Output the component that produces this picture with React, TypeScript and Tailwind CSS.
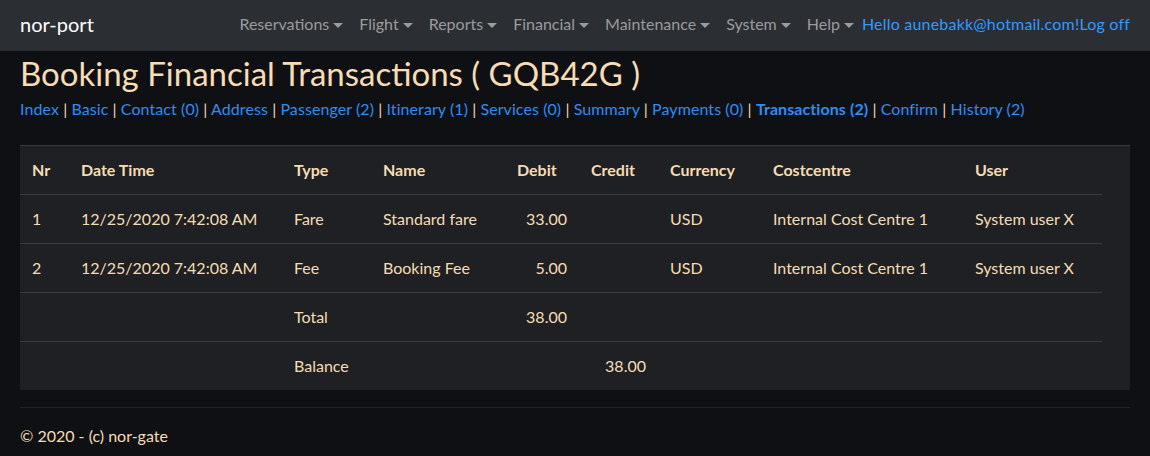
import React from 'react';

const font = { fontFamily: 'Lato, "Open Sans", sans-serif' };

const menus = ['Reservations', 'Flight', 'Reports', 'Financial', 'Maintenance', 'System', 'Help'];

const tabs = [
  'Index',
  'Basic',
  'Contact (0)',
  'Address',
  'Passenger (2)',
  'Itinerary (1)',
  'Services (0)',
  'Summary',
  'Payments (0)',
  'Transactions (2)',
  'Confirm',
  'History (2)',
];

const rows = [
  { nr: '1', when: '12/25/2020 7:42:08 AM', type: 'Fare', name: 'Standard fare', debit: '33.00', credit: '', cur: 'USD', cc: 'Internal Cost Centre 1', user: 'System user X' },
  { nr: '2', when: '12/25/2020 7:42:08 AM', type: 'Fee', name: 'Booking Fee', debit: '5.00', credit: '', cur: 'USD', cc: 'Internal Cost Centre 1', user: 'System user X' },
  { nr: '', when: '', type: 'Total', name: '', debit: '38.00', credit: '', cur: '', cc: '', user: '' },
  { nr: '', when: '', type: 'Balance', name: '', debit: '', credit: '38.00', cur: '', cc: '', user: '' },
];

const Caret = () => (
  <span className="ml-[4px] inline-block w-0 h-0 border-x-[5px] border-x-transparent border-t-[5px] border-t-[#9a9b9d] align-middle" />
);

export default function App() {
  return (
    <div className="min-h-[456px] bg-[#0f1013] text-[#f6dcb4]" style={font}>
      <nav className="h-[51px] bg-[#2b2e32] flex items-center px-[20px] pb-[4px]">
        <span className="text-[20px] text-white">nor-port</span>
        <div className="ml-auto flex items-center text-[16px]">
          {menus.map((m) => (
            <span key={m} className="px-[8px] text-[#9a9b9d]">
              {m}
              <Caret />
            </span>
          ))}
          <span className="tracking-[0.2px] text-[#3399ff]">Hello aunebakk@hotmail.com!</span>
          <span className="tracking-[0.2px] text-[#3399ff]">Log off</span>
        </div>
      </nav>

      <main className="px-[20px]">
        <h2 className="mt-[3px] text-[33px] leading-[38px] text-[#f8dcb4]">Booking Financial Transactions ( GQB42G )</h2>
        <div className="mt-[5px] text-[16px] leading-[24px] tracking-[0.08px]">
          {tabs.map((t, i) => (
            <React.Fragment key={t}>
              {i > 0 && <span className="text-[#f6dcb4]"> | </span>}
              <span className={t === 'Transactions (2)' ? 'font-bold text-[#2f8cf4]' : 'text-[#2f8cf4]'}>{t}</span>
            </React.Fragment>
          ))}
        </div>

        <div className="mt-[24px] bg-[#1f2023] border-t border-[#3a3b3e]">
          <table className="w-[1082px] table-fixed text-[16px] border-collapse">
            <colgroup>
              <col className="w-[49px]" />
              <col className="w-[213px]" />
              <col className="w-[89px]" />
              <col className="w-[134px]" />
              <col className="w-[74px]" />
              <col className="w-[79px]" />
              <col className="w-[103px]" />
              <col className="w-[202px]" />
              <col className="w-[139px]" />
            </colgroup>
            <thead>
              <tr className="h-[48px] font-bold text-left">
                {['Nr', 'Date Time', 'Type', 'Name', 'Debit', 'Credit', 'Currency', 'Costcentre', 'User'].map((h) => (
                  <th key={h} className="px-[12px] font-bold">{h}</th>
                ))}
              </tr>
            </thead>
            <tbody>
              {rows.map((r, i) => (
                <tr key={i} className="h-[49px] border-t border-[#3a3b3e]">
                  <td className="px-[12px]">{r.nr}</td>
                  <td className="px-[12px]">{r.when}</td>
                  <td className="px-[12px]">{r.type}</td>
                  <td className="px-[12px]">{r.name}</td>
                  <td className="px-[12px] text-right">{r.debit}</td>
                  <td className="px-[12px] text-right">{r.credit}</td>
                  <td className="px-[12px]">{r.cur}</td>
                  <td className="px-[12px]">{r.cc}</td>
                  <td className="px-[12px]">{r.user}</td>
                </tr>
              ))}
            </tbody>
          </table>
        </div>

        <div className="mt-[17px] border-t border-[#222326]" />
        <footer className="pt-[16px] pb-[8px] text-[16px] leading-[24px]">© 2020 - (c) nor-gate</footer>
      </main>
    </div>
  );
}
